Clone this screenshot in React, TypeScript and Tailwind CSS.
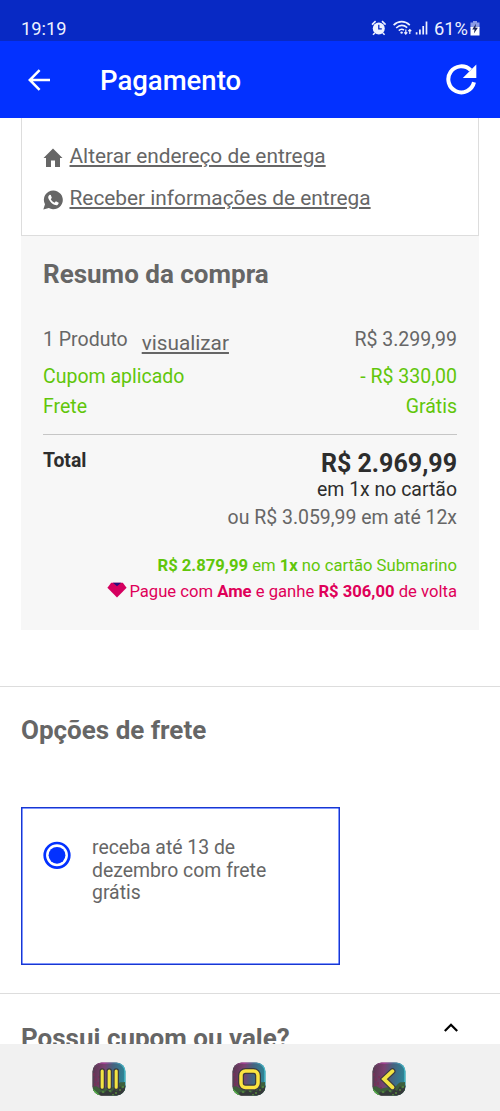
import React from 'react';

const StatusIcons: React.FC = () => (
    <svg width="60" height="18" viewBox="0 0 60 18" fill="none" stroke="#eef1ff">
        {/* alarm */}
        <circle cx="7.8" cy="9.4" r="6" fill="#eef1ff" stroke="none" />
        <path d="M1 5.6 4.6 2.2M14.6 5.6 11 2.2M3.8 14 2 15.8M11.8 14 13.6 15.8" strokeWidth="1.6" />
        <path d="M7.8 5.8V9.8H10.8" stroke="#0829c4" strokeWidth="1.3" />
        {/* wifi */}
        <path d="M22.6 6.1C27.4 1.5 34 1.5 38.8 6.1M25.2 9C28.6 5.8 32.8 5.8 36.2 8.6M27.8 11.6C29.6 9.9 31.4 9.9 33 11.2" strokeWidth="1.6" />
        <circle cx="30.6" cy="13.6" r="1.2" fill="#eef1ff" stroke="none" />
        <path d="M34.8 10.4V15M33.3 13.4 34.8 15 36.3 13.4M38.8 15V10.6M37.3 12.2 38.8 10.6 40.3 12.2" strokeWidth="1.2" />
        {/* signal */}
        <path d="M45.6 15.4V13.2M48.9 15.4V10.4M52.2 15.4V7M55.5 15.4V2.6" strokeWidth="1.7" />
    </svg>
);

const BatteryIcon: React.FC = () => (
    <svg width="10" height="15" viewBox="0 0 10 15">
        <path d="M3 0H7V1.6H9.5V7H.5V1.6H3Z" fill="#8b9be6" />
        <path d="M.5 6H9.5V14.5H.5Z" fill="#fff" />
        <path d="M6 2.8 2.2 8.4H4.6L3.9 12.6 7.9 6.8H5.4Z" fill="#1b2459" />
    </svg>
);

const NavTile: React.FC<{ id: string; children: React.ReactNode }> = ({ id, children }) => (
    <svg width="34" height="34" viewBox="0 0 34 34" fill="none">
        <defs>
            <linearGradient id={`${id}-bg`} x1="0" y1="0.2" x2="1" y2="0.3">
                <stop offset="0" stopColor="#58354f" />
                <stop offset="0.35" stopColor="#79406f" />
                <stop offset="0.6" stopColor="#45627e" />
                <stop offset="1" stopColor="#2b8798" />
            </linearGradient>
            <linearGradient id={`${id}-edge`} x1="0" y1="0" x2="1" y2="0">
                <stop offset="0" stopColor="#4c4650" />
                <stop offset="0.35" stopColor="#b13f9e" />
                <stop offset="0.65" stopColor="#496f93" />
                <stop offset="1" stopColor="#47c3d0" />
            </linearGradient>
            <clipPath id={`${id}-clip`}><rect x="0.5" y="0.5" width="33" height="33" rx="9" /></clipPath>
        </defs>
        <g clipPath={`url(#${id}-clip)`}>
            <rect width="34" height="34" fill={`url(#${id}-bg)`} />
            <rect x="1" y="1" width="32" height="32" rx="8.5" stroke={`url(#${id}-edge)`} strokeWidth="1.4" />
            <path d="M1 25C5 22 7 28 12 26S22 27 25 23 30 21 33 20V34H0Z" fill="#3d5f3c" />
            <path d="M5 34 8 30 12 31 15 28 19 31 22 27 25 29 28 24 30 27 34 23V34Z" fill="#35393a" />
            <path d="M0 26 9 34H0Z" fill="#55b448" />
            <path d="M10 30h2M17 29h2M23 31h2M27 28h2M20 33h2M30 25h2" stroke="#578b3d" strokeWidth="1.5" />
            <path d="M2 11v3M4 16v3M3 21v3M7 14v2M6 20v3M9 25v2" stroke="#793057" strokeWidth="1.5" />
        </g>
        {children}
    </svg>
);

const SummaryRow: React.FC<{ label: string; value: string; className: string }> = ({ label, value, className }) => (
    <div className={`flex justify-between text-[19.5px] text-[#61c60a] ${className}`}>
        <span>{label}</span>
        <span>{value}</span>
    </div>
);

const App: React.FC = () => (
    <div className="flex flex-col w-[500px] h-[1111px] bg-white overflow-hidden font-['Roboto',sans-serif] text-[#666]">
        <div className="h-[41px] shrink-0 bg-[#0829c4] pl-[21px] pr-[20px] pt-[17px] flex justify-between text-[#eef1ff] text-[18.3px] leading-6">
            <span>19:19</span>
            <div className="flex">
                <div className="pt-[2px] pr-[3px]"><StatusIcons /></div>
                <span>61%</span>
                <div className="pt-[4px] pl-[2px]"><BatteryIcon /></div>
            </div>
        </div>
        <header className="h-[77px] shrink-0 bg-[#0331ff] text-white flex items-center pl-[27px] pr-[23px]">
            <svg width="24" height="24" viewBox="0 0 24 24" fill="none" stroke="currentColor" strokeWidth="2.5">
                <path d="M23 12H3M12.6 2.2 2.8 12 12.6 21.8" />
            </svg>
            <h1 className="ml-[49px] text-[27.5px] leading-8 font-medium flex-1 pt-[2px]">Pagamento</h1>
            <svg width="31" height="31" viewBox="0 0 31 31">
                <path d="M28 18.3A13 13 0 1 1 24.6 6.2" fill="none" stroke="currentColor" strokeWidth="4" />
                <path d="M30.3 .5V14H16.8Z" fill="currentColor" />
            </svg>
        </header>

        <main className="flex-1 min-h-0 overflow-hidden">
            <section className="mx-[21px] h-[118px] border-x border-b border-[#ddd] px-[21px] pt-[26px]">
                <div className="flex h-[42px]">
                    <svg width="20" height="20" viewBox="0 0 20 20" fill="#666" className="mt-[4px]">
                        <path d="M10 .5 19.5 10H17V19H12V12.5H8V19H3V10H.5Z" />
                    </svg>
                    <a className="ml-[6.5px] text-[20.83px] leading-6 underline">Alterar endereço de entrega</a>
                </div>
                <div className="flex">
                    <svg width="20" height="20" viewBox="0 0 20 20" className="mt-[4px]">
                        <path d="M10.2.5A9.3 9.3 0 0 0 2 14.3L.3 19.6 5.8 18.1A9.4 9.4 0 1 0 10.2.5Z" fill="#666" />
                        <path d="M6.7 4.7C5 5.8 4.8 7.3 5.8 9.3 7.3 12.2 9.4 14.2 12.1 15.1 14.2 15.7 15.5 14.6 15.7 12.7L12.9 11.2 11.6 12.7C9.8 12 8.5 10.7 7.8 9.2L8.8 7.8 7.8 4.9Z" fill="#fff" />
                    </svg>
                    <a className="ml-[6.5px] text-[20.83px] leading-6 underline">Receber informações de entrega</a>
                </div>
            </section>

            <section className="mx-[21px] h-[394px] bg-[#f7f7f7] px-[22px] pt-[22px]">
                <h2 className="text-[26px] leading-8 font-bold">Resumo da compra</h2>
                <div className="mt-[38px] h-[37px] flex text-[19.5px] leading-6">
                    <span>1 Produto</span>
                    <a className="ml-[14px] pt-[3px] text-[20.75px] underline">visualizar</a>
                    <span className="ml-auto">R$ 3.299,99</span>
                </div>
                <SummaryRow label="Cupom aplicado" value="- R$ 330,00" className="h-[30px] leading-6" />
                <SummaryRow label="Frete" value="Grátis" className="h-[39px] leading-6" />
                <div className="border-t border-[#c6c6c6] pt-[13px] flex justify-between text-[#2d2d2d]">
                    <strong className="text-[19.4px] leading-6 mt-[1px]">Total</strong>
                    <div className="text-right">
                        <div className="text-[25px] leading-8 font-bold">R$ 2.969,99</div>
                        <div className="text-[19.45px] leading-6 -mt-[2px]">em 1x no cartão</div>
                        <div className="text-[19.45px] leading-6 mt-[4px] text-[#666]">ou R$ 3.059,99 em até 12x</div>
                    </div>
                </div>
                <p className="mt-[24px] text-right text-[16.65px] leading-6 text-[#61c60a]"><b>R$ 2.879,99</b> em <b>1x</b> no cartão Submarino</p>
                <p className="mt-[2px] flex justify-end text-[16.65px] leading-6 text-[#df0059]">
                    <svg width="20" height="16" viewBox="0 0 20 16" className="mt-[2px] mr-[2px]">
                        <path d="M4.2.7H15.8L19.6 5.8 10 15.4.4 5.8Z" fill="#d5005f" />
                        <path d="M5.8.7H14.2L10 4.3Z" fill="#26107c" />
                    </svg>
                    <span>Pague com <b>Ame</b> e ganhe <b>R$ 306,00</b> de volta</span>
                </p>
            </section>

            <section className="mt-[56px] h-[307px] border-t border-[#ddd] px-[21px] pt-[27px]">
                <h2 className="text-[26px] leading-8 font-bold">Opções de frete</h2>
                <label className="mt-[61px] w-[319px] h-[158px] border border-[#1937cf] shadow-[inset_0_0_0_0.5px_#0331ff] flex pl-[21px] pt-[28px]">
                    <svg width="28" height="28" viewBox="0 0 28 28" className="mt-[5px] shrink-0">
                        <circle cx="14" cy="14.3" r="12.3" fill="none" stroke="#0331ff" strokeWidth="2.7" />
                        <circle cx="14" cy="14.3" r="8.4" fill="#0331ff" />
                    </svg>
                    <span className="ml-[21px] mt-[1px] w-[200px] text-[19.4px] leading-[22.5px]">receba até 13 de dezembro com frete grátis</span>
                </label>
            </section>

            <section className="border-t border-[#ddd] px-[21px] pt-[28px] flex justify-between">
                <h2 className="text-[26px] leading-8 font-bold">Possui cupom ou vale?</h2>
                <svg width="14" height="9" viewBox="0 0 14 9" className="mr-[21px] mt-[1px]" fill="none" stroke="#000" strokeWidth="2.3">
                    <path d="M.8 8 7 1.8 13.2 8" />
                </svg>
            </section>
        </main>

        <nav className="h-[67px] shrink-0 bg-[#f1f1f1] flex justify-between pl-[92px] pr-[94px] pt-[18px]">
            <NavTile id="recents">
                <path d="M10.2 9V25.2M17.2 9V25.2M24.2 9V25.2" stroke="#3b3a3e" strokeWidth="5.5" strokeLinecap="round" />
                <path d="M10.2 9V25.2M17.2 9V25.2M24.2 9V25.2" stroke="#f2e442" strokeWidth="3.1" strokeLinecap="round" />
            </NavTile>
            <NavTile id="home">
                <rect x="9" y="9" width="17" height="16.5" rx="4.5" stroke="#3b3a3e" strokeWidth="6" />
                <rect x="9" y="9" width="17" height="16.5" rx="4.5" stroke="#fbe440" strokeWidth="3.5" />
            </NavTile>
            <NavTile id="back">
                <path d="M20.5 9.2 12 17 20.5 25.3" stroke="#3b3a3e" strokeWidth="6" strokeLinecap="round" />
                <path d="M20.5 9.2 12 17 20.5 25.3" stroke="#f2e442" strokeWidth="3.8" strokeLinecap="round" />
            </NavTile>
        </nav>
    </div>
);

export default App;
